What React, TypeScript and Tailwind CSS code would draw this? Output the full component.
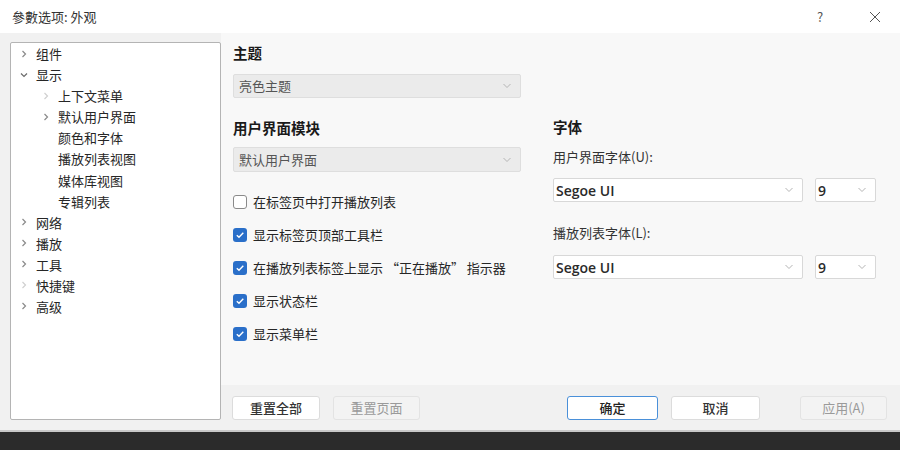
import React from "react";

const FONT = '"Noto Sans CJK SC", "Noto Sans", sans-serif';

function Chevron({ open = false, faint = false }: { open?: boolean; faint?: boolean }) {
  return (
    <svg width="10" height="10" viewBox="0 0 10 10" className="shrink-0">
      {open ? (
        <path d="M2 3.5 L5 6.5 L8 3.5" fill="none" stroke={faint ? "#d0d0d0" : "#6b6b6b"} strokeWidth="1.2" />
      ) : (
        <path d="M3.5 2 L6.5 5 L3.5 8" fill="none" stroke={faint ? "#d0d0d0" : "#8a8a8a"} strokeWidth="1.2" />
      )}
    </svg>
  );
}

function SmallDown({ color = "#b5b5b5" }: { color?: string }) {
  return (
    <svg width="10" height="6" viewBox="0 0 10 6">
      <path d="M1.5 1 L5 4.5 L8.5 1" fill="none" stroke={color} strokeWidth="1" />
    </svg>
  );
}

type TreeItem = { label: string; level: number; chevron: "none" | "closed" | "open" | "faint" };

const tree: TreeItem[] = [
  { label: "组件", level: 0, chevron: "closed" },
  { label: "显示", level: 0, chevron: "open" },
  { label: "上下文菜单", level: 1, chevron: "faint" },
  { label: "默认用户界面", level: 1, chevron: "closed" },
  { label: "颜色和字体", level: 1, chevron: "none" },
  { label: "播放列表视图", level: 1, chevron: "none" },
  { label: "媒体库视图", level: 1, chevron: "none" },
  { label: "专辑列表", level: 1, chevron: "none" },
  { label: "网络", level: 0, chevron: "closed" },
  { label: "播放", level: 0, chevron: "closed" },
  { label: "工具", level: 0, chevron: "closed" },
  { label: "快捷键", level: 0, chevron: "faint" },
  { label: "高级", level: 0, chevron: "closed" },
];

function Checkbox({ checked }: { checked: boolean }) {
  return checked ? (
    <div className="w-[14px] h-[14px] rounded-[3px] bg-[#2a6fc9] flex items-center justify-center shrink-0">
      <svg width="10" height="10" viewBox="0 0 10 10">
        <path d="M1.8 5.2 L4 7.3 L8.3 2.8" fill="none" stroke="#fff" strokeWidth="1.4" />
      </svg>
    </div>
  ) : (
    <div className="w-[14px] h-[14px] rounded-[3px] bg-white border border-[#8a8a8a] shrink-0" />
  );
}

function Btn({ children, w, variant = "normal" }: { children: React.ReactNode; w: string; variant?: "normal" | "primary" | "disabled" }) {
  const base = "h-[24px] flex items-center justify-center text-[13px] rounded-[3px] ";
  const cls =
    variant === "primary"
      ? "bg-white border border-[#4a90d9] text-[#222] font-medium"
      : variant === "disabled"
      ? "bg-[#f3f3f3] border border-[#e3e3e3] text-[#9a9a9a]"
      : "bg-white border border-[#dcdcdc] text-[#333] font-medium";
  return <div className={base + cls + " " + w}>{children}</div>;
}

export default function App() {
  return (
    <div className="w-[900px] h-[450px] flex flex-col overflow-hidden bg-[#f0f0f0]" style={{ fontFamily: FONT }}>
      {/* Title bar */}
      <div className="h-[33px] bg-white flex items-center shrink-0">
        <div className="pl-[12px] text-[13px] text-[#333]">參數选项: 外观</div>
        <div className="flex-1" />
        <div className="w-[30px] text-center text-[13px] text-[#555] mr-[25px]">?</div>
        <div className="w-[30px] flex justify-center mr-[10px]">
          <svg width="12" height="12" viewBox="0 0 12 12">
            <path d="M1 1 L11 11 M11 1 L1 11" stroke="#555" strokeWidth="1" />
          </svg>
        </div>
      </div>

      {/* Body */}
      <div className="h-[397px] flex shrink-0 bg-[#f1f1f1]">
        {/* Tree */}
        <div className="pl-[10px] pt-[9px] pb-[10px] shrink-0">
          <div className="w-[211px] h-[378px] bg-white border border-[#b4b4b4] rounded-[2px] pt-[0px]">
            {tree.map((t) => (
              <div key={t.label} className="h-[21.08px] flex items-center text-[13px] text-[#262626]">
                <div className={(t.level === 0 ? "w-[8px]" : "w-[30px]") + " shrink-0"} />
                <div className="w-[10px] flex justify-center shrink-0">
                  {t.chevron === "closed" && <Chevron />}
                  {t.chevron === "open" && <Chevron open />}
                  {t.chevron === "faint" && <Chevron faint />}
                </div>
                <div className="w-[7px] shrink-0" />
                <div className="leading-none">{t.label}</div>
              </div>
            ))}
          </div>
        </div>

        {/* Right side */}
        <div className="flex-1 flex flex-col">
          <div className="h-[352px] bg-[#f8f8f8] flex pl-[12px] pt-[10px]">
            {/* Left sub column */}
            <div className="w-[288px] flex flex-col shrink-0">
              <div className="h-[20px] flex items-center text-[14.5px] font-bold text-[#1a1a1a]">主题</div>
              <div className="mt-[11px] h-[24px] bg-[#ebebeb] border border-[#dedede] rounded-[2px] flex items-center pl-[5px] pr-[8px] text-[13px] text-[#555]">
                <span className="flex-1">亮色主题</span>
                <SmallDown />
              </div>
              <div className="mt-[20px] h-[20px] flex items-center text-[14.5px] font-bold text-[#1a1a1a]">用户界面模块</div>
              <div className="mt-[9px] h-[25px] bg-[#ebebeb] border border-[#dedede] rounded-[2px] flex items-center pl-[5px] pr-[8px] text-[13px] text-[#555]">
                <span className="flex-1">默认用户界面</span>
                <SmallDown />
              </div>
              <div className="mt-[20px] flex flex-col gap-[13px]">
                {[
                  { c: false, t: "在标签页中打开播放列表" },
                  { c: true, t: "显示标签页顶部工具栏" },
                  { c: true, t: "在播放列表标签上显示 “正在播放” 指示器" },
                  { c: true, t: "显示状态栏" },
                  { c: true, t: "显示菜单栏" },
                ].map((r) => (
                  <div key={r.t} className="h-[20px] flex items-center gap-[6px] text-[13px] text-[#262626] whitespace-nowrap">
                    <Checkbox checked={r.c} />
                    <span>{r.t}</span>
                  </div>
                ))}
              </div>
            </div>

            {/* Right sub column */}
            <div className="ml-[32px] w-[323px] flex flex-col shrink-0">
              <div className="mt-[74px] h-[20px] flex items-center text-[14.5px] font-bold text-[#1a1a1a]">字体</div>
              <div className="mt-[10px] h-[20px] flex items-center text-[13px] text-[#333]">用户界面字体(U):</div>
              <div className="mt-[11px] flex gap-[12px]">
                <div className="w-[250px] h-[24px] bg-white border border-[#d8d8d8] rounded-[2px] flex items-center pl-[2px] pr-[8px]">
                  <span className="flex-1 text-[14px] font-semibold text-[#2a2a2a]" style={{ fontFamily: '"Open Sans", sans-serif' }}>Segoe UI</span>
                  <SmallDown />
                </div>
                <div className="w-[61px] h-[24px] bg-white border border-[#d8d8d8] rounded-[2px] flex items-center pl-[2px] pr-[8px]">
                  <span className="flex-1 text-[14px] font-semibold text-[#2a2a2a]" style={{ fontFamily: '"Open Sans", sans-serif' }}>9</span>
                  <SmallDown />
                </div>
              </div>
              <div className="mt-[21px] h-[20px] flex items-center text-[13px] text-[#333]">播放列表字体(L):</div>
              <div className="mt-[12px] flex gap-[12px]">
                <div className="w-[250px] h-[24px] bg-white border border-[#d8d8d8] rounded-[2px] flex items-center pl-[2px] pr-[8px]">
                  <span className="flex-1 text-[14px] font-semibold text-[#2a2a2a]" style={{ fontFamily: '"Open Sans", sans-serif' }}>Segoe UI</span>
                  <SmallDown />
                </div>
                <div className="w-[61px] h-[24px] bg-white border border-[#d8d8d8] rounded-[2px] flex items-center pl-[2px] pr-[8px]">
                  <span className="flex-1 text-[14px] font-semibold text-[#2a2a2a]" style={{ fontFamily: '"Open Sans", sans-serif' }}>9</span>
                  <SmallDown />
                </div>
              </div>
            </div>
          </div>

          {/* Button bar */}
          <div className="h-[45px] flex items-start pt-[11px] pl-[11px]">
            <Btn w="w-[88px]">重置全部</Btn>
            <div className="ml-[13px]">
              <Btn w="w-[87px]" variant="disabled">重置页面</Btn>
            </div>
            <div className="ml-[147px]">
              <Btn w="w-[91px]" variant="primary">确定</Btn>
            </div>
            <div className="ml-[13px]">
              <Btn w="w-[89px]">取消</Btn>
            </div>
            <div className="ml-[40px]">
              <Btn w="w-[87px]" variant="disabled">应用(A)</Btn>
            </div>
          </div>
        </div>
      </div>

      <div className="h-[2px] bg-[#c8c8c8] shrink-0" />
      <div className="flex-1 bg-[#2b2b2b]" />
    </div>
  );
}
